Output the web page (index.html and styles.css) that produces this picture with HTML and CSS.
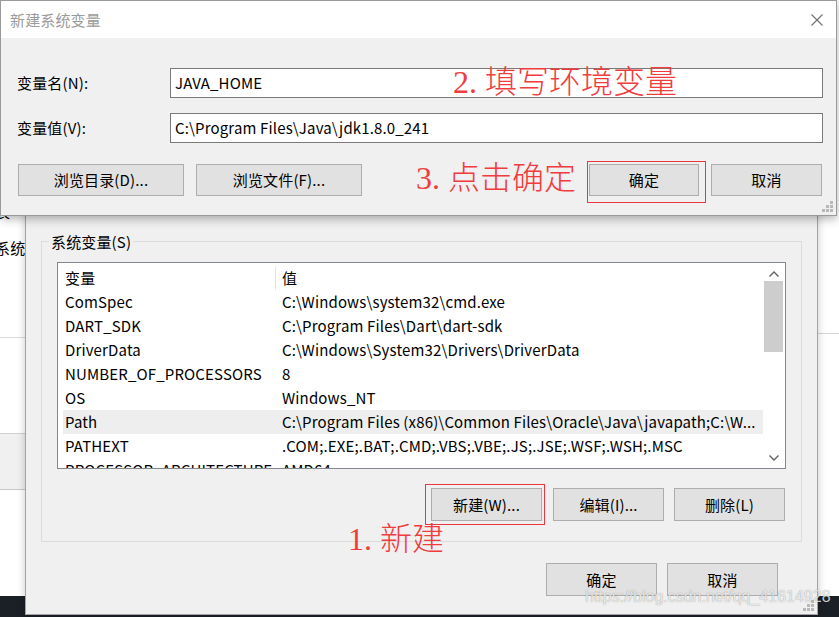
FILE: index.html
```html
<!DOCTYPE html>
<html lang="zh-CN">
<head>
<meta charset="utf-8">
<title>新建系统变量</title>
<link rel="stylesheet" href="styles.css">
</head>
<body>
<div class="desk">
  <div class="taskbar"></div>

  <div class="win-left">
    <div class="wl-line1">表</div>
    <div class="wl-line2">系统</div>
    <div class="wl-rule"></div>
    <div class="wl-band"></div>
  </div>

  <div class="win-right">
    <div class="wr-rule"></div>
  </div>

  <div class="env-win">
    <div class="group">
      <div class="legend">系统变量(S)</div>
      <div class="listbox">
        <div class="list-main">
          <div class="list-head">
            <div class="hcell hcell-1">变量</div>
            <div class="hcell hcell-2">值</div>
          </div>
          <div class="row"><span class="c1">ComSpec</span><span class="c2">C:\Windows\system32\cmd.exe</span></div>
          <div class="row"><span class="c1">DART_SDK</span><span class="c2">C:\Program Files\Dart\dart-sdk</span></div>
          <div class="row"><span class="c1">DriverData</span><span class="c2">C:\Windows\System32\Drivers\DriverData</span></div>
          <div class="row"><span class="c1">NUMBER_OF_PROCESSORS</span><span class="c2">8</span></div>
          <div class="row"><span class="c1">OS</span><span class="c2">Windows_NT</span></div>
          <div class="row row-hot"><span class="c1">Path</span><span class="c2">C:\Program Files (x86)\Common Files\Oracle\Java\javapath;C:\W...</span></div>
          <div class="row"><span class="c1">PATHEXT</span><span class="c2">.COM;.EXE;.BAT;.CMD;.VBS;.VBE;.JS;.JSE;.WSF;.WSH;.MSC</span></div>
          <div class="row"><span class="c1">PROCESSOR_ARCHITECTURE</span><span class="c2">AMD64</span></div>
        </div>
        <div class="vscroll">
          <svg class="arrow" width="12" height="8" viewBox="0 0 12 8"><polyline points="1.5,6.5 6,2 10.5,6.5" fill="none" stroke="#606060" stroke-width="1.4"/></svg>
          <div class="track"><div class="thumb"></div></div>
          <svg class="arrow" width="12" height="8" viewBox="0 0 12 8"><polyline points="1.5,1.5 6,6 10.5,1.5" fill="none" stroke="#606060" stroke-width="1.4"/></svg>
        </div>
      </div>
      <div class="btn-row">
        <button class="btn btn-marked">新建(W)...</button>
        <button class="btn btn-g11">编辑(I)...</button>
        <button class="btn btn-g10">删除(L)</button>
      </div>
    </div>
    <div class="foot-row">
      <button class="btn">确定</button>
      <button class="btn btn-g10">取消</button>
    </div>
    <svg class="grip grip-env" width="12" height="12" viewBox="0 0 12 12"><g fill="#b8b8b8"><rect x="8" y="0" width="3" height="3"/><rect x="4" y="4" width="3" height="3"/><rect x="8" y="4" width="3" height="3"/><rect x="0" y="8" width="3" height="3"/><rect x="4" y="8" width="3" height="3"/><rect x="8" y="8" width="3" height="3"/></g></svg>
  </div>

  <div class="dlg">
    <div class="dlg-title">
      <span class="dlg-caption">新建系统变量</span>
      <svg class="close" width="12" height="12" viewBox="0 0 12 12"><path d="M0.5 0.5 L11.5 11.5 M11.5 0.5 L0.5 11.5" stroke="#707070" stroke-width="1.1" fill="none"/></svg>
    </div>
    <div class="dlg-body">
      <div class="field">
        <label class="flabel">变量名(N):</label>
        <div class="input">JAVA_HOME</div>
      </div>
      <div class="field field-2">
        <label class="flabel">变量值(V):</label>
        <div class="input">C:\Program Files\Java\jdk1.8.0_241</div>
      </div>
      <div class="dlg-btns">
        <button class="btn btn-wide">浏览目录(D)...</button>
        <button class="btn btn-wide btn-g12">浏览文件(F)...</button>
        <span class="spacer"></span>
        <button class="btn btn-ok">确定</button>
        <button class="btn btn-g12">取消</button>
      </div>
    </div>
    <svg class="grip grip-dlg" width="12" height="12" viewBox="0 0 12 12"><g fill="#b8b8b8"><rect x="8" y="0" width="3" height="3"/><rect x="4" y="4" width="3" height="3"/><rect x="8" y="4" width="3" height="3"/><rect x="0" y="8" width="3" height="3"/><rect x="4" y="8" width="3" height="3"/><rect x="8" y="8" width="3" height="3"/></g></svg>
  </div>

  <div class="mark mark-ok"></div>
  <div class="mark mark-new"></div>

  <div class="note note-2">2. 填写环境变量</div>
  <div class="note note-3">3. 点击确定</div>
  <div class="note note-1">1. 新建</div>

  <div class="watermark">https://blog.csdn.net/qq_41614928</div>
</div>
</body>
</html>
```

FILE: styles.css
```css
* { box-sizing: border-box; }

html, body {
  margin: 0;
  padding: 0;
  width: 839px;
  height: 617px;
  overflow: hidden;
}

body {
  font-family: "Noto Sans CJK SC", "Noto Sans", sans-serif;
  font-size: 15px;
  letter-spacing: 0.15px;
  color: #000;
}

.desk {
  position: relative;
  width: 839px;
  height: 617px;
  background: #fff;
  overflow: hidden;
}

.taskbar {
  position: absolute;
  left: 0;
  right: 0;
  bottom: 0;
  height: 21px;
  background: #1b1f26;
}

/* window behind, on the left */
.win-left {
  position: absolute;
  left: -185px;
  top: 0;
  width: 230px;
  height: 596px;
  background: #fff;
  padding-left: 180px;
  display: flex;
  flex-direction: column;
}
.wl-line1 {
  margin-top: 202px;
  line-height: 20px;
  height: 20px;
}
.wl-line2 {
  margin-top: 16px;
  line-height: 20px;
  height: 20px;
}
.wl-rule {
  margin-top: 79px;
  margin-left: -180px;
  height: 1px;
  background: #dadada;
}
.wl-band {
  margin-top: 95px;
  margin-left: -180px;
  height: 57px;
  background: #f0f0f0;
  border-top: 1px solid #d0d0d0;
  border-bottom: 1px solid #c8c8c8;
}

/* window behind, on the right */
.win-right {
  position: absolute;
  left: 800px;
  top: 0;
  width: 60px;
  height: 596px;
  background: #fff;
  display: flex;
  flex-direction: column;
}
.wr-rule {
  margin-top: 333px;
  height: 1px;
  background: #d6d6d6;
}

/* environment variable window */
.env-win {
  position: absolute;
  left: 25px;
  top: 196px;
  width: 793px;
  height: 419px;
  background: #f0f0f0;
  border: 1px solid #a3a3a3;
  box-shadow: 0 0 8px rgba(0, 0, 0, 0.22);
  padding: 44px 15px 18px 15px;
  display: flex;
  flex-direction: column;
}

.group {
  border: 1px solid #dcdcdc;
  height: 301px;
  padding: 20px 15px 20px 15px;
  display: flex;
  flex-direction: column;
}
.legend {
  align-self: flex-start;
  margin: -31px 0 9px -8px;
  padding: 0 2px;
  height: 22px;
  line-height: 22px;
  background: #f0f0f0;
  color: #000;
}

.listbox {
  height: 207px;
  border: 1px solid #828790;
  background: #fff;
  display: flex;
  overflow: hidden;
}
.list-main {
  flex: 1;
  padding-left: 5px;
  overflow: hidden;
}
.list-head {
  display: grid;
  grid-template-columns: 213px 1fr;
  height: 27px;
  align-items: center;
}
.hcell {
  line-height: 24px;
  height: 24px;
  margin-top: 2px;
  white-space: nowrap;
}
.hcell-1 {
  padding-left: 2px;
  border-right: 1px solid #e5e5e5;
}
.hcell-2 {
  padding-left: 6px;
}
.row {
  display: grid;
  grid-template-columns: 213px 1fr;
  height: 24px;
  line-height: 24px;
  white-space: nowrap;
}
.row-hot {
  background: #eeeeee;
}
.c1 {
  padding-left: 2px;
  overflow: hidden;
}
.c2 {
  padding-left: 6px;
  overflow: hidden;
}

.vscroll {
  width: 22px;
  display: flex;
  flex-direction: column;
  align-items: center;
  background: #fff;
}
.arrow {
  flex: none;
  margin: 7px 0 3px;
}
.vscroll .arrow:last-child {
  margin: 3px 0 6px;
}
.track {
  flex: 1;
  width: 100%;
  padding: 0 2px 0 1px;
}
.thumb {
  height: 71px;
  background: #cdcdcd;
}

.btn {
  font: inherit;
  font-size: 15px;
  letter-spacing: 0.15px;
  color: #000;
  height: 33px;
  width: 111px;
  background: #e1e1e1;
  border: 1px solid #adadad;
  padding: 0;
  line-height: 30px;
  margin: 0;
}

.btn-row {
  margin-top: 19px;
  display: flex;
  justify-content: flex-end;
  padding-right: 1px;
}
.btn-g11 { margin-left: 11px; }
.btn-g10 { margin-left: 10px; }
.btn-g12 { margin-left: 12px; }

.foot-row {
  margin-top: 21px;
  display: flex;
  justify-content: flex-end;
  padding-right: 24px;
}

.grip {
  position: absolute;
  right: 2px;
  bottom: 2px;
}

/* new system variable dialog */
.dlg {
  position: absolute;
  left: 0;
  top: 0;
  width: 837px;
  height: 216px;
  background: #f0f0f0;
  border: 1px solid #9a9a9a;
  box-shadow: 0 3px 9px rgba(0, 0, 0, 0.3);
  display: flex;
  flex-direction: column;
}
.dlg-title {
  height: 37px;
  background: #fff;
  display: flex;
  align-items: center;
  padding: 0 13px 0 9px;
  flex: none;
}
.dlg-caption {
  color: #9b9b9b;
  font-size: 15px;
  line-height: 20px;
  margin-top: 1px;
  flex: 1;
}
.close {
  margin-top: 1px;
}
.dlg-body {
  padding: 30px 13px 0 16px;
  display: flex;
  flex-direction: column;
}
.field {
  display: flex;
  align-items: center;
  height: 30px;
}
.field-2 {
  margin-top: 15px;
}
.flabel {
  width: 153px;
  line-height: 20px;
}
.input {
  flex: 1;
  height: 30px;
  background: #fff;
  border: 1px solid #7a7a7a;
  line-height: 27px;
  padding-left: 4px;
  white-space: nowrap;
}
.dlg-btns {
  margin-top: 21px;
  display: flex;
  padding-left: 1px;
  padding-right: 1px;
}
.dlg-btns .btn {
  height: 32px;
}
.btn-wide { width: 166px; }
.btn-ok { width: 110px; }
.spacer { flex: 1; }

/* red annotation boxes */
.mark {
  position: absolute;
  border: 1px solid #e8383d;
}
.mark-ok {
  left: 587px;
  top: 161px;
  width: 119px;
  height: 42px;
}
.mark-new {
  left: 425px;
  top: 484px;
  width: 120px;
  height: 41px;
}

.note {
  position: absolute;
  font-family: "Liberation Serif", "Noto Sans CJK SC", serif;
  font-weight: 300;
  font-size: 32px;
  line-height: 36px;
  letter-spacing: 0;
  color: #f03c3c;
  white-space: nowrap;
}
.note-2 { left: 453px; top: 64px; }
.note-3 { left: 416px; top: 160px; }
.note-1 { left: 348px; top: 521px; }

.watermark {
  position: absolute;
  left: 585px;
  top: 586px;
  font-family: "Liberation Sans", sans-serif;
  font-size: 16px;
  line-height: 22px;
  letter-spacing: 0;
  color: rgba(255, 255, 255, 0.8);
  text-shadow: 0 0 1px rgba(0, 0, 0, 0.45);
  white-space: nowrap;
}
```
